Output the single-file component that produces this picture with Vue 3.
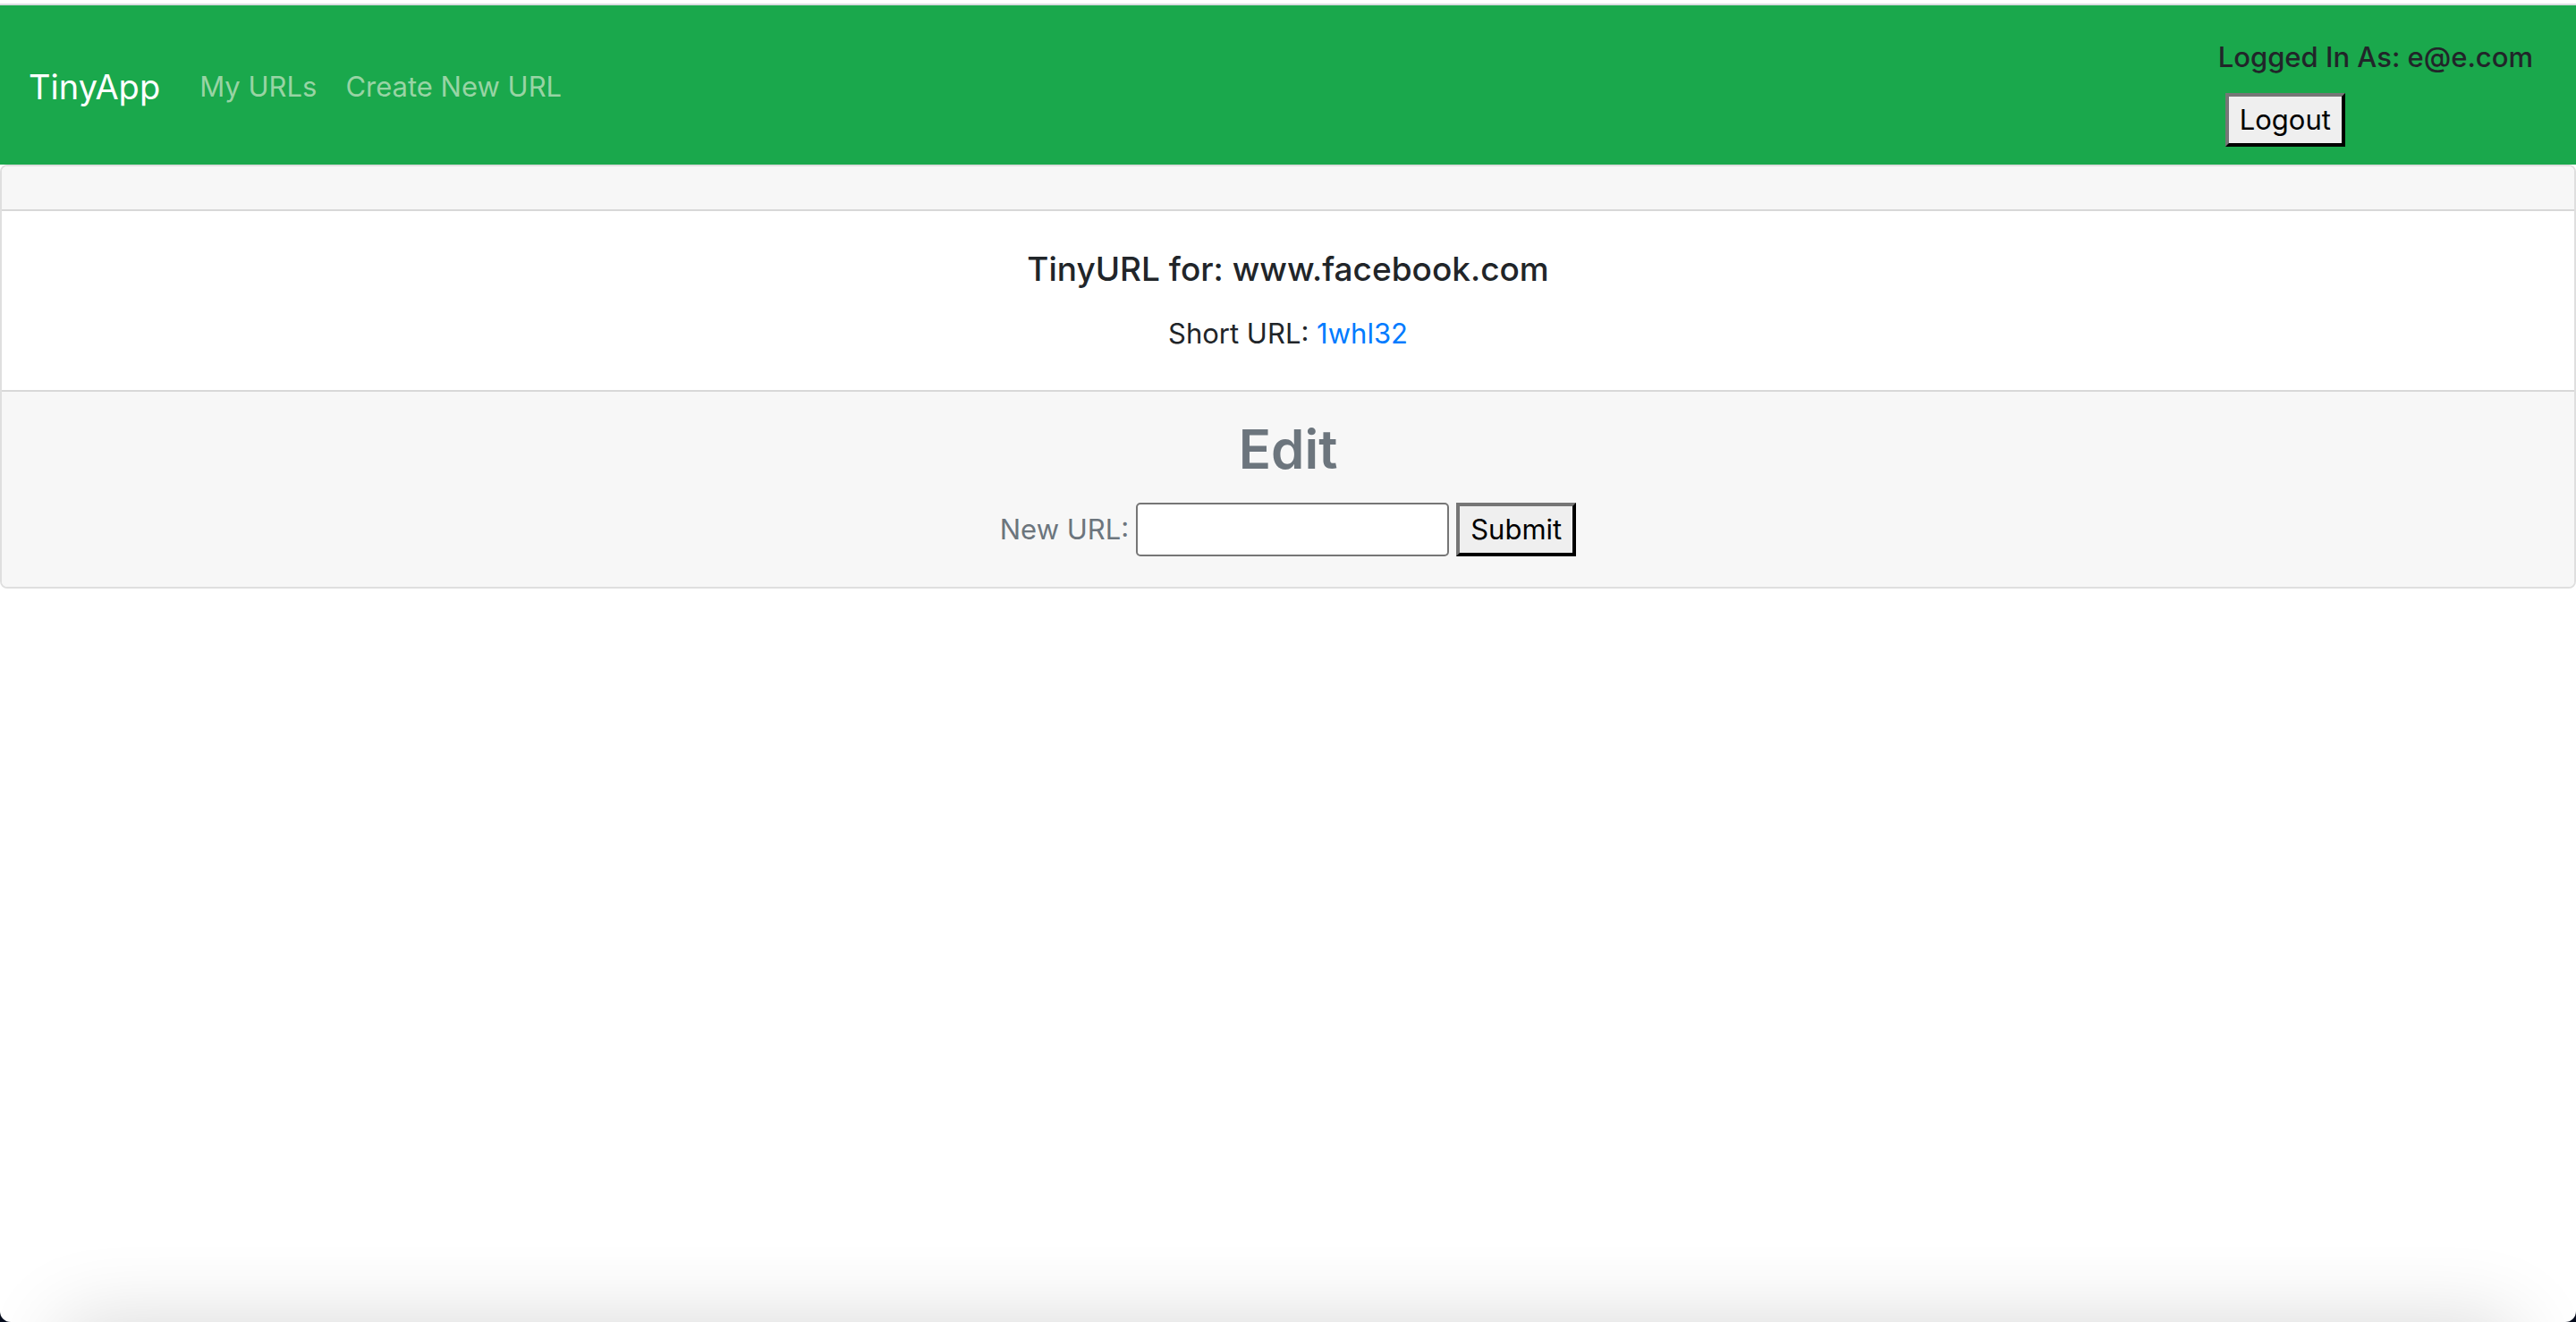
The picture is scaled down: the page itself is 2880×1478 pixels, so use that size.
<script setup>
import { ref } from 'vue'

const email = 'e@e.com'
const longUrl = 'www.facebook.com'
const shortUrl = '1whl32'
const newUrl = ref('')
</script>

<template>
  <div class="page">
    <header class="navbar">
      <nav class="nav">
        <a class="brand" href="#">TinyApp</a>
        <a class="nav-link" href="#">My URLs</a>
        <a class="nav-link" href="#">Create New URL</a>
      </nav>
      <form class="session" @submit.prevent>
        <span class="session-user">Logged In As: {{ email }}</span>
        <button class="btn" type="submit">Logout</button>
      </form>
    </header>

    <main class="card">
      <div class="card-header"></div>
      <section class="card-body">
        <h5 class="card-title">TinyURL for: {{ longUrl }}</h5>
        <p class="card-text">Short URL: <a class="short-link" href="#">{{ shortUrl }}</a></p>
      </section>
      <section class="card-footer">
        <h2 class="edit-title">Edit</h2>
        <form class="edit-form" @submit.prevent>
          <label for="new-url">New URL:</label>
          <input id="new-url" v-model="newUrl" class="field" type="text" />
          <button class="btn" type="submit">Submit</button>
        </form>
      </section>
    </main>
    <div class="shade"></div>
  </div>
</template>

<style>
body {
  margin: 0;
  background: #050b1c;
}
</style>

<style scoped>
.page {
  position: relative;
  box-sizing: border-box;
  min-height: 100vh;
  padding-top: 4px;
  overflow: hidden;
  border-radius: 0 0 12px 12px;
  background: #fff;
  color: #212529;
  font-family: Inter, "Liberation Sans", sans-serif;
  font-size: 31px;
  line-height: 48px;
}

a {
  text-decoration: none;
}

.navbar {
  display: flex;
  align-items: center;
  justify-content: space-between;
  padding: 34px 48px 20px 32px;
  border-top: 2px solid #dadce0;
  background: #1aa84c;
}

.nav {
  display: flex;
  align-items: center;
  gap: 32px;
  padding-bottom: 10px;
}

.brand {
  margin-right: 12px;
  color: #fff;
  font-size: 38px;
}

.nav-link {
  color: #98d4a4;
}

.session {
  display: flex;
  flex-direction: column;
  align-items: flex-start;
  gap: 16px;
}

.session-user {
  font-weight: 500;
}

.session .btn {
  margin-left: 8px;
}

.btn {
  box-sizing: border-box;
  height: 60px;
  padding: 0 12px;
  border: 4px outset #767676;
  border-color: #767676 #212121 #212121 #767676;
  border-radius: 0;
  background: #efefef;
  color: #000;
  font: inherit;
}

.card {
  border: 2px solid #dfdfdf;
  border-radius: 8px;
  text-align: center;
}

.card-header {
  height: 48px;
  border-bottom: 2px solid #d8d8d8;
  border-radius: 6px 6px 0 0;
  background: #f7f7f7;
}

.card-body {
  padding: 41px 40px 39px;
}

.card-title {
  margin: 0 0 24px;
  font-size: 37px;
  font-weight: 500;
  line-height: 48px;
}

.card-text {
  margin: 0;
}

.short-link {
  color: #007bff;
}

.card-footer {
  padding: 22px 40px 34px;
  border-top: 2px solid #d8d8d8;
  border-radius: 0 0 6px 6px;
  background: #f7f7f7;
  color: #6c757d;
}

.edit-title {
  margin: 0 0 18px;
  font-size: 60px;
  font-weight: 600;
  line-height: 84px;
}

.edit-form {
  display: flex;
  align-items: center;
  justify-content: center;
  gap: 8px;
}

.field {
  box-sizing: border-box;
  width: 350px;
  height: 60px;
  padding: 2px 4px;
  border: 2px solid #767676;
  border-radius: 5px;
  background: #fff;
  font: inherit;
}

.shade {
  position: absolute;
  top: 100%;
  right: 70px;
  left: 70px;
  height: 100px;
  box-shadow: 0 0 90px rgba(0, 0, 0, 0.16);
}
</style>
